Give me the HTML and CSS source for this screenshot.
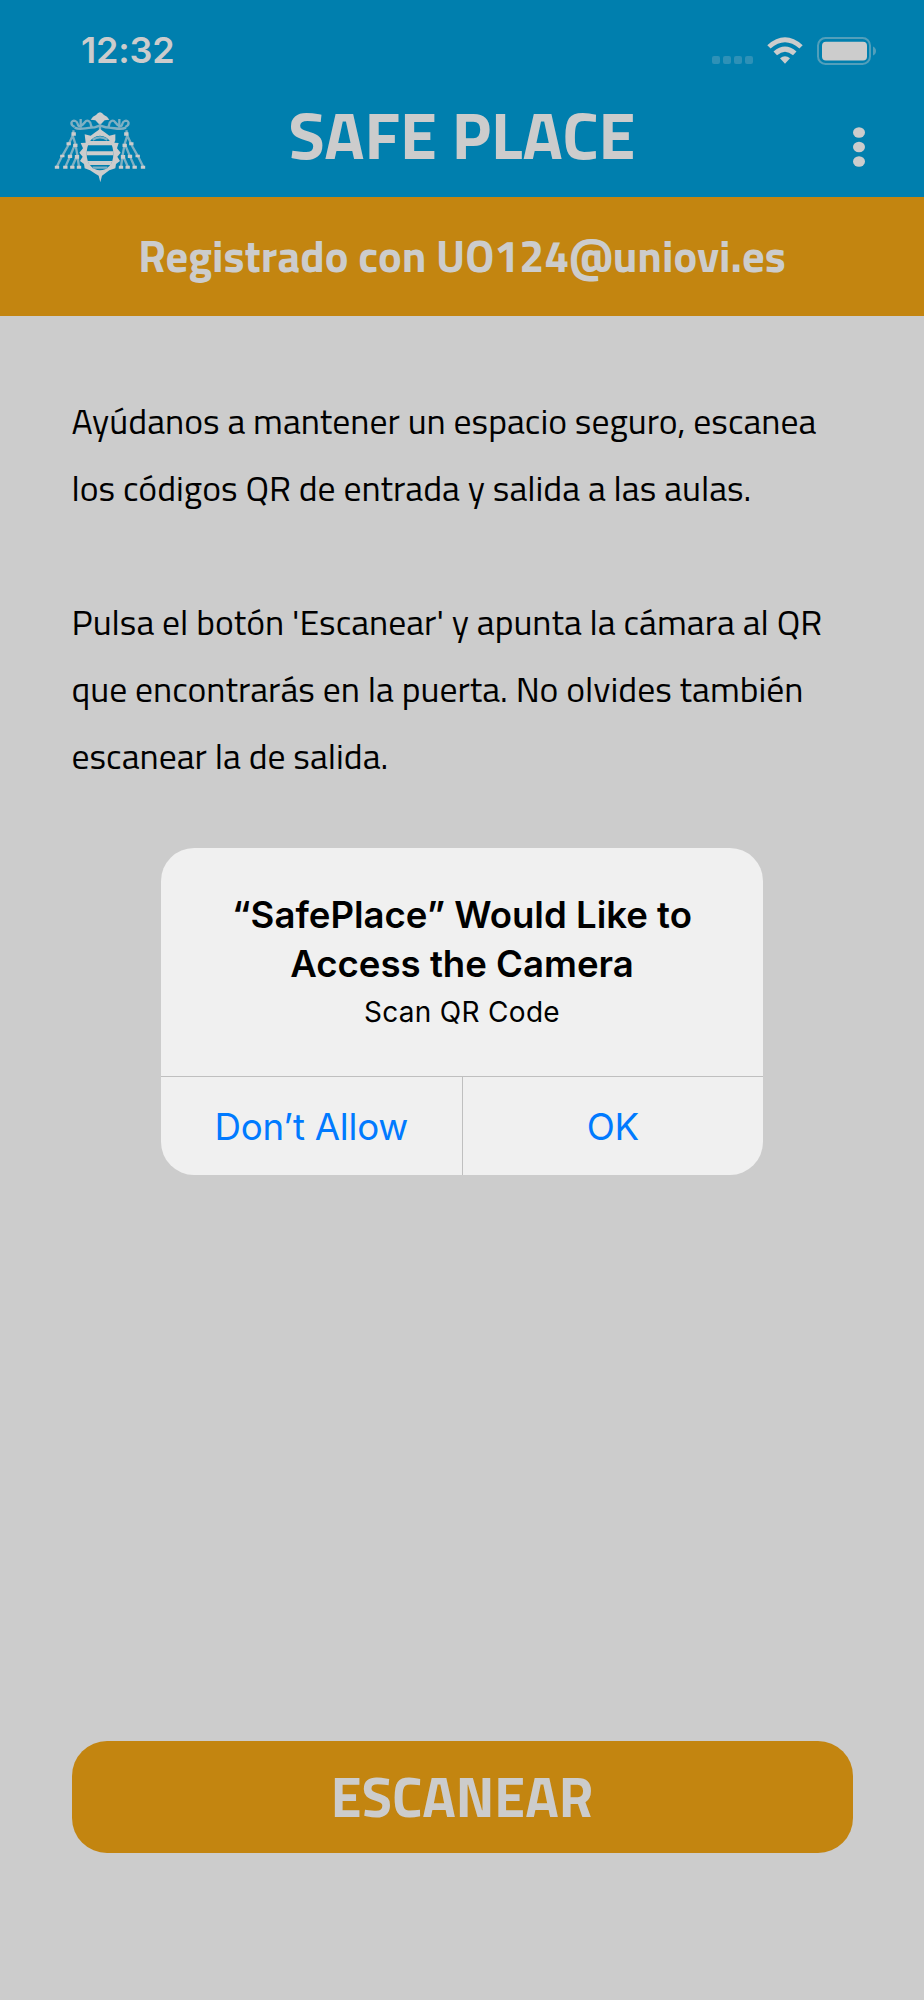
FILE: index.html
```html
<!DOCTYPE html>
<html lang="es">
<head>
  <meta charset="UTF-8">
  <title>Safe Place</title>
  <link rel="stylesheet" href="styles.css">
</head>
<body>
  <div class="screen">
    <header class="header">
      <div class="status-bar">
        <span class="time">12:32</span>
        <div class="status-icons">
          <div class="signal"><i></i><i></i><i></i><i></i></div>
          <svg class="wifi" width="36" height="28" viewBox="0 0 36 28">
            <path d="M0.3 8.2Q18-7.6 35.7 8.2L32.4 11.6Q18-1.2 3.6 11.6Z"/>
            <path d="M6.5 14.6Q18 4.6 29.5 14.6L26 18.2Q18 11.2 10 18.2Z"/>
            <path d="M13 21.2Q18 17.2 23 21.2L18 26.8Z"/>
          </svg>
          <svg class="battery" width="60" height="28" viewBox="0 0 60 28">
            <rect class="battery-frame" x="1" y="1" width="52" height="26" rx="7.5"/>
            <rect x="5" y="4.7" width="45" height="18.8" rx="4"/>
            <path class="battery-tip" d="M56 9.5Q59 11 59 14T56 18.5Z"/>
          </svg>
        </div>
      </div>
      <div class="app-bar">
        <svg class="crest" width="120" height="100" viewBox="0 0 360 300">
          <g class="crest-lines">
            <path d="M180 72V108M104 98C120 106 136 98 154 98S172 92 180 92S190 98 206 98S240 106 258 98"/>
            <path d="M104 96C88 88 94 74 106 78S108 96 122 92S134 72 146 78S148 98 158 94"/>
            <path d="M256 96C272 88 266 74 254 78S252 96 238 92S226 72 214 78S212 98 202 94"/>
            <path d="M122 72V98M238 72V98"/>
            <path d="M101 106L98 122L82 156L66 184L50 216M98 122L106 146L90 184L76 216M106 146L112 180L96 216M112 180L117 216"/>
            <path d="M259 106L262 122L278 156L294 184L310 216M262 122L254 146L270 184L284 216M254 146L248 180L264 216M248 180L243 216"/>
          </g>
          <path d="M152 74Q158 64 168 60Q180 44 192 60Q202 64 208 74L194 76L184 86H176L166 76Z"/>
          <g class="crest-tassels">
            <path d="M101 112V122M86 142V151M106 146V156M67 179V187M90 179V189M111 180V191"/>
            <path d="M259 112V122M274 142V151M254 146V156M293 179V187M270 179V189M249 180V191"/>
            <path d="M51 212V221M76 212V221M97 212V221M117 212V221"/>
            <path d="M309 212V221M284 212V221M263 212V221M243 212V221"/>
          </g>
          <path fill-rule="evenodd" d="M166 112L180 102L194 112L208 122L226 118V136L223 143L236 144L231 160L242 173L232 185L240 198L228 207L226 220L208 226L194 236L186 242L181 262L176 242L166 236L150 226L134 220L132 207L120 198L128 185L118 173L129 160L122 144L137 143L134 118L152 122ZM180 122C150 124 140 150 140 178S158 226 180 226S220 208 220 178S208 124 180 122Z"/>
          <path d="M148 138H212L218 151H142ZM140 169H220V181H140ZM143 198H217L212 210H148Z"/>
          <path class="crest-lines" d="M158 134Q180 120 202 134M158 218H202"/>
        </svg>
        <h1 class="title">SAFE PLACE</h1>
        <svg class="menu" width="14" height="42" viewBox="0 0 14 42">
          <ellipse cx="7" cy="6.5" rx="6" ry="5.2"/>
          <ellipse cx="7" cy="21" rx="6" ry="5.2"/>
          <ellipse cx="7" cy="35.5" rx="6" ry="5.2"/>
        </svg>
      </div>
    </header>

    <div class="banner">Registrado con UO124@uniovi.es</div>

    <main class="content">
      <p>
        Ayúdanos a mantener un espacio seguro, escanea<br>
        los códigos QR de entrada y salida a las aulas.
      </p>
      <p>
        Pulsa el botón 'Escanear' y apunta la cámara al QR<br>
        que encontrarás en la puerta. No olvides también<br>
        escanear la de salida.
      </p>
    </main>

    <button class="scan-button">ESCANEAR</button>

    <div class="alert">
      <div class="alert-body">
        <h2>“SafePlace” Would Like to<br>Access the Camera</h2>
        <div class="alert-message">Scan QR Code</div>
      </div>
      <div class="alert-actions">
        <button class="deny">Don’t Allow</button>
        <button class="accept">OK</button>
      </div>
    </div>
  </div>
</body>
</html>
```
FILE: styles.css
```css
* {
  box-sizing: border-box;
}

body {
  margin: 0;
  background: #cccccc;
  font-family: "Titillium Web", Roboto, sans-serif;
}

button {
  border: none;
  padding: 0;
  margin: 0;
  background: none;
  font-family: inherit;
  white-space: nowrap;
}

.screen {
  position: relative;
  display: flex;
  flex-direction: column;
  width: 924px;
  height: 2000px;
  overflow: hidden;
}

/* header */
.header {
  height: 196.5px;
  background: #007fae;
  color: #cccccc;
}

.header svg {
  display: block;
  fill: #cccccc;
}

.status-bar {
  display: flex;
  justify-content: space-between;
  height: 95px;
  padding: 28px 47px 0 81px;
}

.time {
  font: 600 36px/45px Inter, sans-serif;
  letter-spacing: -0.2px;
}

.status-icons {
  display: flex;
  padding-top: 8.5px;
}

.signal {
  display: flex;
  gap: 3.5px;
  padding-top: 19.5px;
  margin-right: 14.5px;
}

.signal i {
  width: 7.5px;
  height: 7.5px;
  border-radius: 2px;
  background: #2e91b7;
}

.wifi {
  margin-right: 14px;
}

.header .battery-frame {
  fill: none;
  stroke: #529fbb;
  stroke-width: 2;
}

.header .battery-tip {
  fill: #529fbb;
}

.app-bar {
  display: grid;
  grid-template-columns: 1fr auto 1fr;
  padding: 0 58px 0 40px;
}

.header .crest-lines {
  fill: none;
  stroke: #7fb0c3;
  stroke-width: 7;
}

.crest-tassels {
  stroke: #cccccc;
  stroke-width: 13;
}

.title {
  margin: 0 0 0 18px;
  font-size: 66.8px;
  line-height: 79px;
  white-space: nowrap;
}

.menu {
  margin-top: 31px;
  justify-self: end;
}

.banner {
  height: 119.5px;
  background: #c38510;
  color: #cccccc;
  font-size: 44.6px;
  font-weight: bold;
  line-height: 117px;
  text-align: center;
  white-space: nowrap;
}

/* text */
.content {
  padding: 72px 71.5px 0;
  font-size: 35.67px;
  line-height: 66.9px;
  color: #000;
  white-space: nowrap;
}

.content p {
  margin: 0 0 66.9px;
}

.scan-button {
  height: 111.5px;
  margin: auto 71.5px 147.5px;
  border-radius: 35px;
  background: #c38510;
  color: #cccccc;
  font-size: 55.7px;
  font-weight: bold;
  line-height: 110px;
}

/* camera permission dialog */
.alert {
  position: absolute;
  top: 848px;
  left: 161px;
  width: 602px;
  height: 327px;
  border-radius: 33px;
  background: #f0f0f0;
  color: #000;
  font-family: Inter, sans-serif;
  text-align: center;
  white-space: nowrap;
}

.alert-body {
  height: 228px;
  padding-top: 43px;
}

.alert h2 {
  margin: 0;
  font-size: 36.6px;
  font-weight: 600;
  line-height: 49px;
}

.alert-message {
  font-size: 28px;
  line-height: 47px;
  letter-spacing: 0.3px;
}

.alert-actions {
  display: flex;
  height: 99px;
  border-top: 1px solid #bfbfbf;
}

.alert-actions button {
  flex: 1;
  color: #007aff;
  font-size: 36.7px;
  line-height: 100px;
  letter-spacing: -0.25px;
}

.alert-actions .deny {
  border-right: 1px solid #bfbfbf;
}
```
